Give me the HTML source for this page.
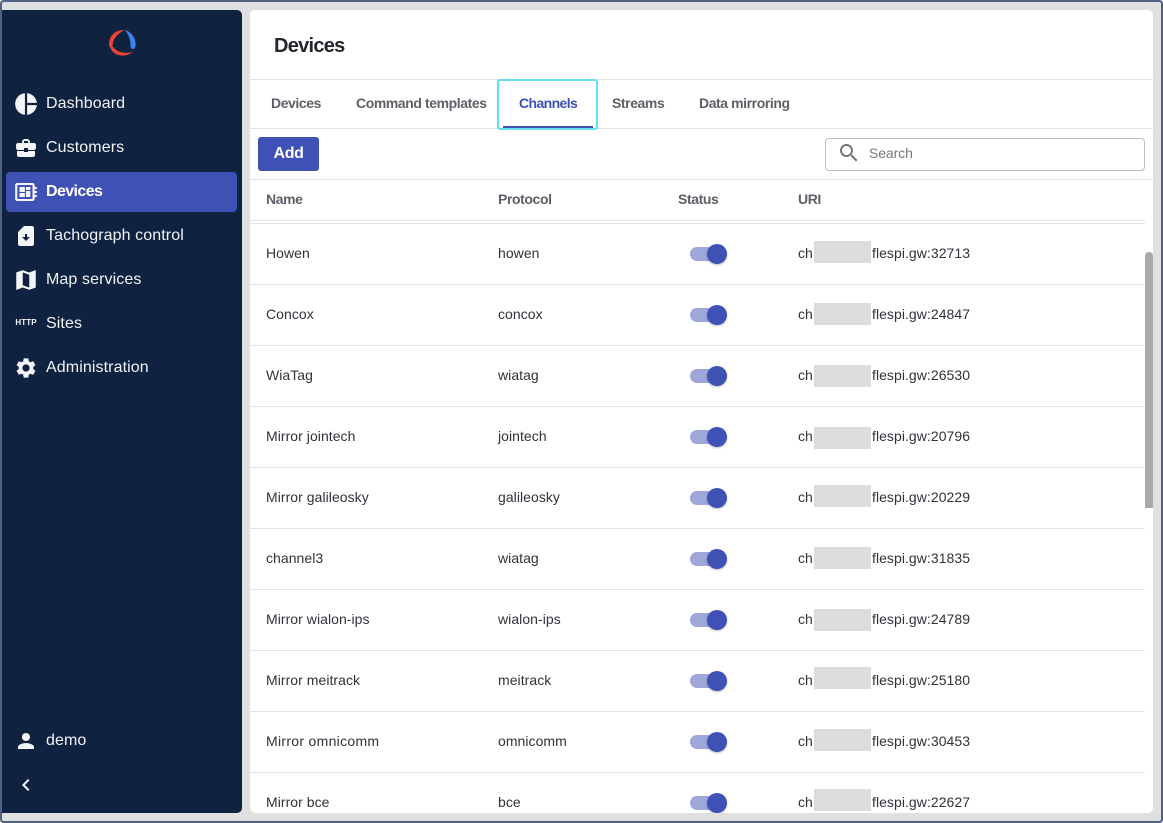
<!DOCTYPE html>
<html><head><meta charset="utf-8"><style>
html,body{margin:0;padding:0}
body{width:1163px;height:823px;overflow:hidden;position:relative;background:#e0e0e0;font-family:"Liberation Sans",Arial,sans-serif;color:#263238;font-size:14px}
.a{position:absolute;white-space:nowrap}
#frame{left:0;top:0;width:1159px;height:819px;border:2px solid #4f6283;border-radius:4px;z-index:9;pointer-events:none}
#side{left:2px;top:10px;width:240px;height:803px;background:#0f2341;border-radius:0 5px 5px 0}
#main{left:250px;top:10px;width:903px;height:803px;background:#fff;border-radius:5px;overflow:hidden}
.nav{left:46px;color:#f1f3f6;font-size:16px;line-height:20px;letter-spacing:.1px}
.ic{position:absolute;fill:#f4f5f8}
.h{height:1px;background:#e4e4e4}
.tab{font-weight:bold;font-size:14px;line-height:18px;color:#5d6068;letter-spacing:-.42px}
.th{font-weight:bold;font-size:14px;line-height:18px;color:#5d6068;letter-spacing:-.4px}
.td{font-size:14px;line-height:18px;color:#2f333a;letter-spacing:.05px}
.tr{left:690px;width:27px;height:14px;border-radius:7px;background:#9fa7da}
.kn{left:707px;width:20px;height:20px;border-radius:50%;background:#3f51b5;box-shadow:0 1px 2px rgba(0,0,0,.25)}
.rd{left:814px;width:57px;height:22px;background:#dcdcdc}
</style></head><body>
<div class="a" id="side"></div>
<div class="a" style="left:6px;top:172px;width:231px;height:40px;background:#3f51b5;border-radius:4px"></div>

<svg class="a" style="left:102px;top:24px" width="40" height="38" viewBox="102 24 40 38">
<path d="M124.5 30C114 29.5 107.5 38 109.5 47L112.5 46C112.5 40 116.5 34 124.5 30Z" fill="#ef4136"/>
<path d="M110 46.5C112 55 123 59 133 52C126 54 118 52.5 114 48C112.5 46 110.5 45 110 46.5Z" fill="#ef4136"/>
<path d="M125 30C132 32 136.5 39 135.5 46C135 50 131 50 130.5 46.5C131 41 129 35 125 30Z" fill="#3b82f0"/>
</svg>

<svg class="a ic" style="left:13px;top:91px" width="26" height="26" viewBox="0 0 24 24"><path d="M11 2v20c-5.07-.5-9-4.79-9-10s3.93-9.5 9-10zm2.03 0v8.99H22c-.47-4.74-4.24-8.52-8.97-8.99zm0 11.01V22c4.74-.47 8.5-4.25 8.97-8.99h-8.97z"/></svg>
<svg class="a ic" style="left:14px;top:136px" width="24" height="24" viewBox="0 0 24 24"><path d="M10 16v-1H3.01L3 19c0 1.11.89 2 2 2h14c1.11 0 2-.89 2-2v-4h-7v1h-4zm10-9h-4.01V5l-2-2h-4l-2 2v2H4c-1.1 0-2 .9-2 2v3c0 1.11.89 2 2 2h6v-2h4v2h6c1.1 0 2-.9 2-2V9c0-1.1-.9-2-2-2zm-6 0h-4V5h4v2z"/></svg>
<svg class="a ic" style="left:13px;top:180px" width="26" height="24" viewBox="0 0 24 24" preserveAspectRatio="none"><path d="M22 9V7h-2V5c0-1.1-.9-2-2-2H4c-1.1 0-2 .9-2 2v14c0 1.1.9 2 2 2h14c1.1 0 2-.9 2-2v-2h2v-2h-2v-2h2v-2h-2V9h2zm-4 10H4V5h14v14zM6 13h5v4H6zm6-6h4v3h-4zM6 7h5v5H6zm6 4h4v6h-4z"/></svg>
<svg class="a ic" style="left:14px;top:224px" width="24" height="24" viewBox="0 0 24 24"><path d="M18 2h-8L4 8v12c0 1.1.9 2 2 2h12c1.1 0 2-.9 2-2V4c0-1.1-.9-2-2-2zm-6 15l-4-4h3v-3h2v3h3l-4 4z"/></svg>
<svg class="a ic" style="left:13px;top:267px" width="26" height="26" viewBox="0 0 24 24"><path d="M20.5 3l-.16.03L15 5.1 9 3 3.36 4.9c-.21.07-.36.25-.36.48V20.5c0 .28.22.5.5.5l.16-.03L9 18.9l6 2.1 5.64-1.9c.21-.07.36-.25.36-.48V3.5c0-.28-.22-.5-.5-.5zM15 19l-6-2.11V5l6 2.11V19z"/></svg>
<div class="a" style="left:14px;top:318px;width:24px;text-align:center;font:bold 8px/10px 'Liberation Sans',sans-serif;color:#f4f5f8;letter-spacing:.1px">HTTP</div>
<svg class="a ic" style="left:14px;top:356px" width="24" height="24" viewBox="0 0 24 24"><path d="M19.14 12.94c.04-.3.06-.61.06-.94 0-.32-.02-.64-.07-.94l2.03-1.58c.18-.14.23-.41.12-.61l-1.92-3.32c-.12-.22-.37-.29-.59-.22l-2.39.96c-.5-.38-1.03-.7-1.62-.94l-.36-2.54c-.04-.24-.24-.41-.48-.41h-3.84c-.24 0-.43.17-.47.41l-.36 2.54c-.59.24-1.13.57-1.62.94l-2.39-.96c-.22-.08-.47 0-.59.22L2.74 8.87c-.12.21-.08.47.12.61l2.03 1.58c-.05.3-.09.63-.09.94s.02.64.07.94l-2.03 1.58c-.18.14-.23.41-.12.61l1.92 3.32c.12.22.37.29.59.22l2.39-.96c.5.38 1.03.7 1.62.94l.36 2.54c.05.24.24.41.48.41h3.84c.24 0 .44-.17.47-.41l.36-2.54c.59-.24 1.13-.56 1.62-.94l2.39.96c.22.08.47 0 .59-.22l1.92-3.32c.12-.22.07-.47-.12-.61l-2.01-1.58zM12 15.6c-1.98 0-3.6-1.62-3.6-3.6s1.62-3.6 3.6-3.6 3.6 1.62 3.6 3.6-1.62 3.6-3.6 3.6z"/></svg>
<svg class="a ic" style="left:14px;top:729px" width="24" height="24" viewBox="0 0 24 24"><path d="M12 12c2.21 0 4-1.79 4-4s-1.79-4-4-4-4 1.79-4 4 1.79 4 4 4zm0 2c-2.67 0-8 1.34-8 4v2h16v-2c0-2.66-5.33-4-8-4z"/></svg>
<svg class="a ic" style="left:14px;top:773px" width="24" height="24" viewBox="0 0 24 24"><path d="M15.41 7.41L14 6l-6 6 6 6 1.41-1.41L10.83 12z"/></svg>

<div class="a nav" style="top:94px">Dashboard</div>
<div class="a nav" style="top:138px">Customers</div>
<div class="a nav" style="top:182px;font-weight:bold;color:#fff;letter-spacing:-.6px">Devices</div>
<div class="a nav" style="top:226px">Tachograph control</div>
<div class="a nav" style="top:270px">Map services</div>
<div class="a nav" style="top:314px">Sites</div>
<div class="a nav" style="top:358px">Administration</div>
<div class="a nav" style="top:731px">demo</div>

<div class="a" id="main"></div>
<div class="a" style="left:274px;top:34px;font-weight:bold;font-size:20px;line-height:24px;color:#22262c;letter-spacing:-.72px">Devices</div>
<div class="a h" style="left:250px;top:79px;width:903px"></div>
<div class="a h" style="left:250px;top:128px;width:903px"></div>

<div class="a tab" style="left:271px;top:94px">Devices</div>
<div class="a tab" style="left:356px;top:94px">Command templates</div>
<div class="a" style="left:497px;top:79px;width:97px;height:47px;border:2px solid #62e0f2;border-radius:3px;background:#fff"></div>
<div class="a tab" style="left:519px;top:94px;color:#3f51b5;letter-spacing:-.6px">Channels</div>
<div class="a" style="left:503px;top:126px;width:90px;height:2px;background:#3f51b5"></div>
<div class="a tab" style="left:612px;top:94px">Streams</div>
<div class="a tab" style="left:699px;top:94px">Data mirroring</div>

<div class="a" style="left:258px;top:137px;width:61px;height:34px;background:#3f51b5;border-radius:3px;color:#fff;font-weight:bold;font-size:16px;line-height:33px;text-align:center;letter-spacing:-.4px">Add</div>

<div class="a" style="left:825px;top:138px;width:318px;height:31px;border:1px solid #bdbdbd;border-radius:4px;background:#fff"></div>
<svg class="a" style="left:837px;top:141px;fill:#757575" width="24" height="24" viewBox="0 0 24 24"><path d="M15.5 14h-.79l-.28-.27C15.41 12.59 16 11.11 16 9.5 16 5.91 13.09 3 9.5 3S3 5.91 3 9.5 5.91 16 9.5 16c1.61 0 3.09-.59 4.23-1.57l.27.28v.79l5 4.99L20.49 19l-4.99-5zm-6 0C7.01 14 5 11.99 5 9.5S7.01 5 9.5 5 14 7.01 14 9.5 11.99 14 9.5 14z"/></svg>
<div class="a" style="left:869px;top:144px;font-size:14px;line-height:18px;color:#777a80;letter-spacing:-.1px">Search</div>

<div class="a h" style="left:250px;top:179px;width:903px"></div>
<div class="a th" style="left:266px;top:190px">Name</div>
<div class="a th" style="left:498px;top:190px">Protocol</div>
<div class="a th" style="left:678px;top:190px">Status</div>
<div class="a th" style="left:798px;top:190px">URI</div>
<div class="a h" style="left:250px;top:220px;width:895px"></div>
<div class="a h" style="left:250px;top:223px;width:895px"></div>

<div class="a td" style="left:266px;top:244px">Howen</div><div class="a td" style="left:498px;top:244px">howen</div><div class="a tr" style="top:247px"></div><div class="a kn" style="top:244px"></div><div class="a td" style="left:798px;top:244px">ch</div><div class="a rd" style="top:241px"></div><div class="a td" style="left:872px;top:244px">flespi.gw:32713</div><div class="a h" style="left:250px;top:284px;width:895px"></div>
<div class="a td" style="left:266px;top:305px">Concox</div><div class="a td" style="left:498px;top:305px">concox</div><div class="a tr" style="top:308px"></div><div class="a kn" style="top:305px"></div><div class="a td" style="left:798px;top:305px">ch</div><div class="a rd" style="top:303px"></div><div class="a td" style="left:872px;top:305px">flespi.gw:24847</div><div class="a h" style="left:250px;top:345px;width:895px"></div>
<div class="a td" style="left:266px;top:366px">WiaTag</div><div class="a td" style="left:498px;top:366px">wiatag</div><div class="a tr" style="top:369px"></div><div class="a kn" style="top:366px"></div><div class="a td" style="left:798px;top:366px">ch</div><div class="a rd" style="top:365px"></div><div class="a td" style="left:872px;top:366px">flespi.gw:26530</div><div class="a h" style="left:250px;top:406px;width:895px"></div>
<div class="a td" style="left:266px;top:427px">Mirror jointech</div><div class="a td" style="left:498px;top:427px">jointech</div><div class="a tr" style="top:430px"></div><div class="a kn" style="top:427px"></div><div class="a td" style="left:798px;top:427px">ch</div><div class="a rd" style="top:427px"></div><div class="a td" style="left:872px;top:427px">flespi.gw:20796</div><div class="a h" style="left:250px;top:467px;width:895px"></div>
<div class="a td" style="left:266px;top:488px">Mirror galileosky</div><div class="a td" style="left:498px;top:488px">galileosky</div><div class="a tr" style="top:491px"></div><div class="a kn" style="top:488px"></div><div class="a td" style="left:798px;top:488px">ch</div><div class="a rd" style="top:485px"></div><div class="a td" style="left:872px;top:488px">flespi.gw:20229</div><div class="a h" style="left:250px;top:528px;width:895px"></div>
<div class="a td" style="left:266px;top:549px">channel3</div><div class="a td" style="left:498px;top:549px">wiatag</div><div class="a tr" style="top:552px"></div><div class="a kn" style="top:549px"></div><div class="a td" style="left:798px;top:549px">ch</div><div class="a rd" style="top:547px"></div><div class="a td" style="left:872px;top:549px">flespi.gw:31835</div><div class="a h" style="left:250px;top:589px;width:895px"></div>
<div class="a td" style="left:266px;top:610px">Mirror wialon-ips</div><div class="a td" style="left:498px;top:610px">wialon-ips</div><div class="a tr" style="top:613px"></div><div class="a kn" style="top:610px"></div><div class="a td" style="left:798px;top:610px">ch</div><div class="a rd" style="top:609px"></div><div class="a td" style="left:872px;top:610px">flespi.gw:24789</div><div class="a h" style="left:250px;top:650px;width:895px"></div>
<div class="a td" style="left:266px;top:671px">Mirror meitrack</div><div class="a td" style="left:498px;top:671px">meitrack</div><div class="a tr" style="top:674px"></div><div class="a kn" style="top:671px"></div><div class="a td" style="left:798px;top:671px">ch</div><div class="a rd" style="top:667px"></div><div class="a td" style="left:872px;top:671px">flespi.gw:25180</div><div class="a h" style="left:250px;top:711px;width:895px"></div>
<div class="a td" style="left:266px;top:732px;letter-spacing:.3px">Mirror omnicomm</div><div class="a td" style="left:498px;top:732px">omnicomm</div><div class="a tr" style="top:735px"></div><div class="a kn" style="top:732px"></div><div class="a td" style="left:798px;top:732px">ch</div><div class="a rd" style="top:729px"></div><div class="a td" style="left:872px;top:732px">flespi.gw:30453</div><div class="a h" style="left:250px;top:772px;width:895px"></div>
<div class="a td" style="left:266px;top:793px">Mirror bce</div><div class="a td" style="left:498px;top:793px">bce</div><div class="a tr" style="top:796px"></div><div class="a kn" style="top:793px"></div><div class="a td" style="left:798px;top:793px">ch</div><div class="a rd" style="top:789px"></div><div class="a td" style="left:872px;top:793px">flespi.gw:22627</div>

<div class="a" style="left:1145px;top:252px;width:8px;height:256px;background:#a9a9a9;border-radius:4px 4px 0 0"></div>
<div class="a" style="left:250px;top:813px;width:913px;height:10px;background:#e0e0e0"></div>
<div class="a" id="frame"></div>
</body></html>
